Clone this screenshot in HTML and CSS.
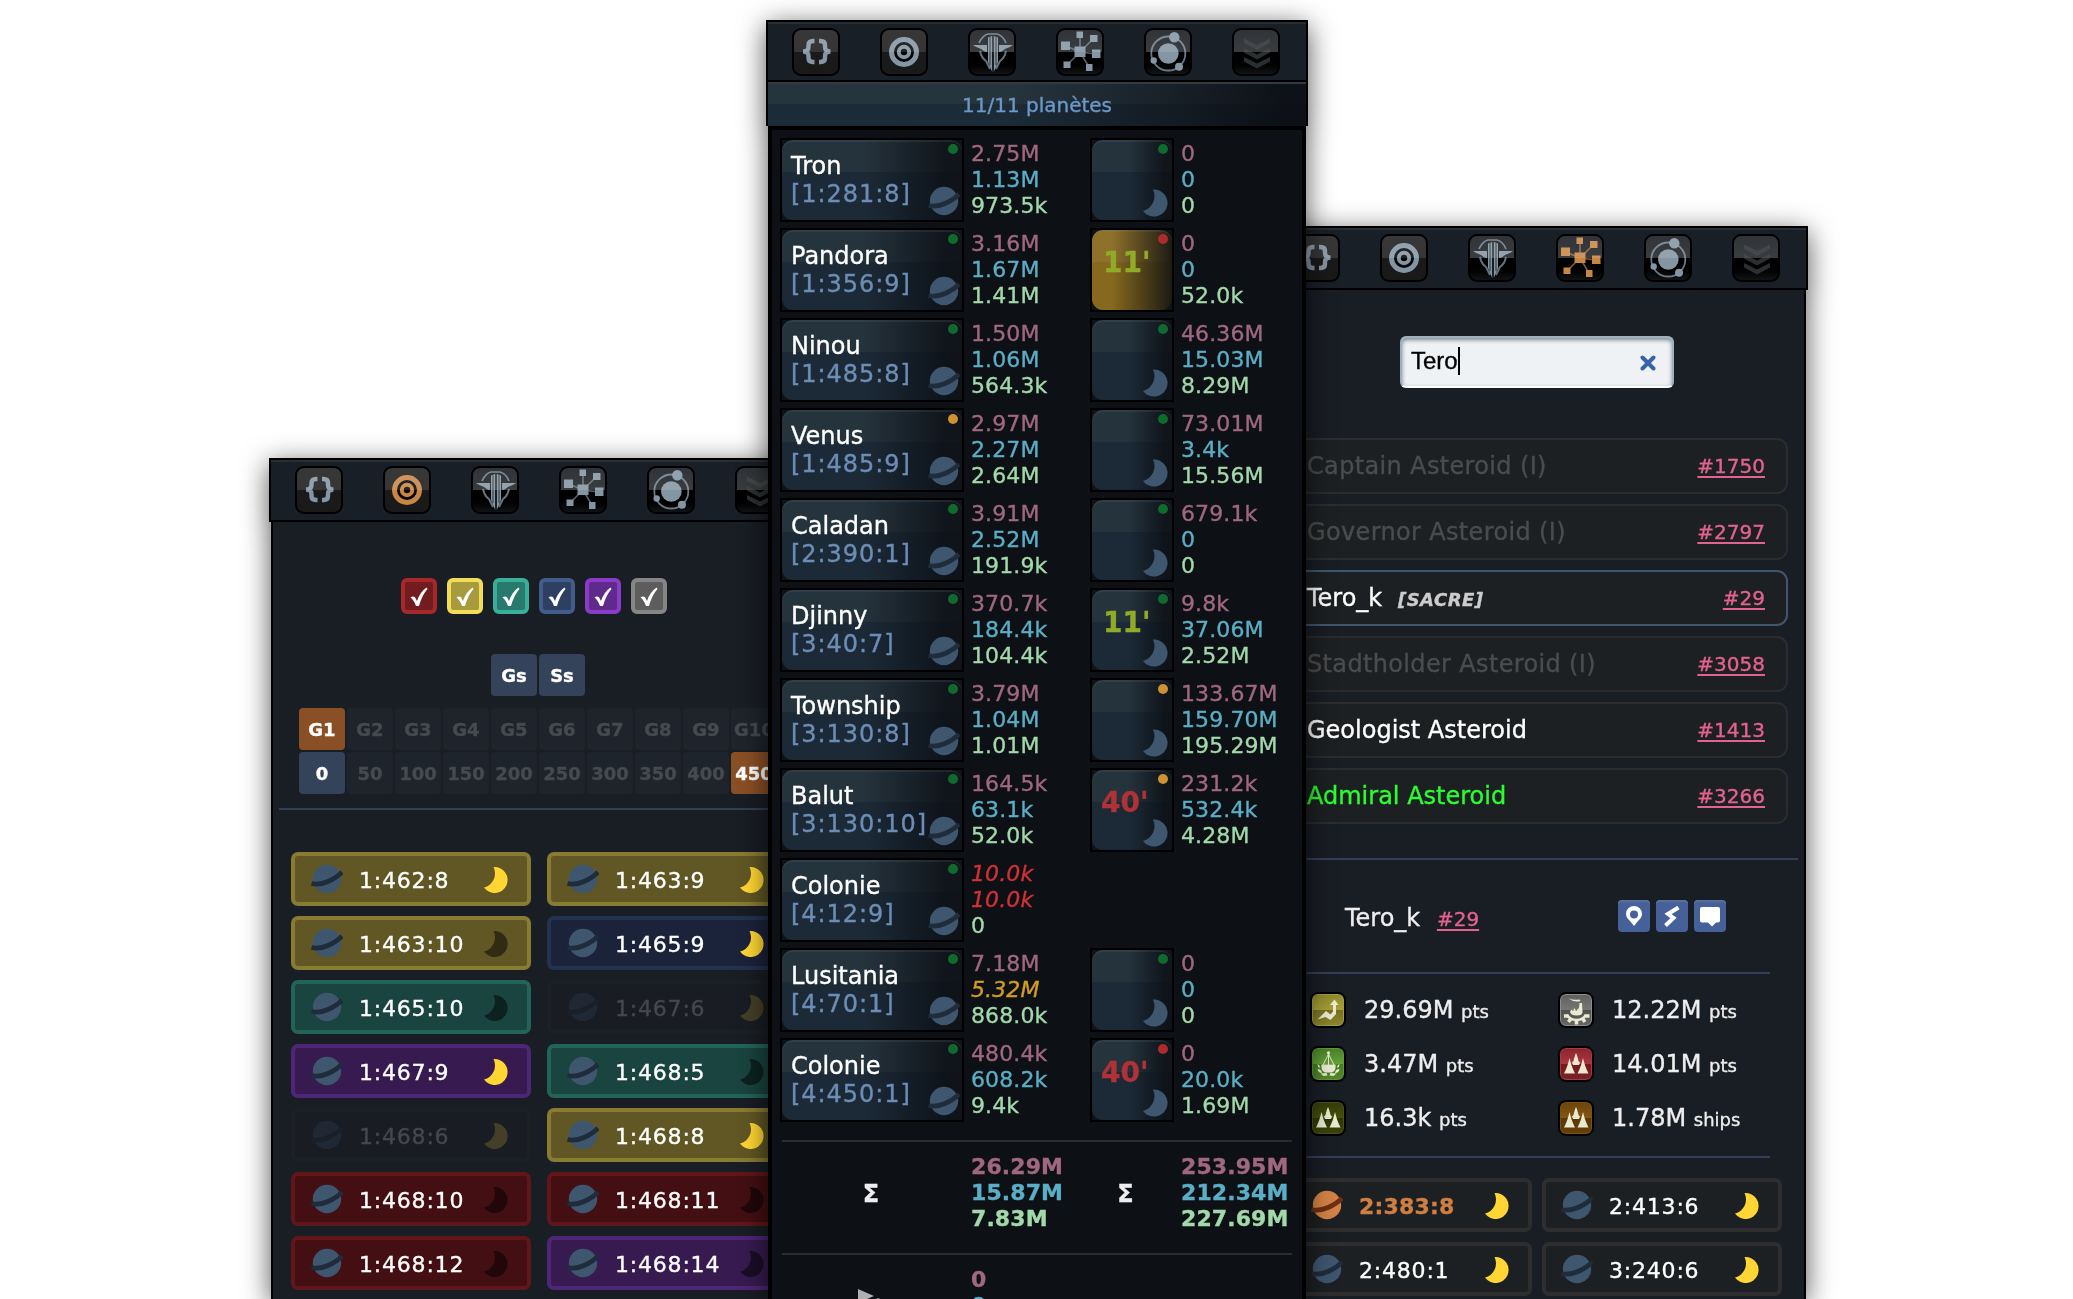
FILE: index.html
```html
<!DOCTYPE html>
<html lang="fr">
<head>
<meta charset="utf-8">
<title>Planètes</title>
<link rel="stylesheet" href="styles.css">
</head>
<body>
<svg class="defs" aria-hidden="true">
  <symbol id="braces" viewBox="0 0 48 48"><path d="M22.500 13H21q-4.500 0-4.500 4v2q0 4.500-5.500 4.500 5.500 0 5.500 4.500v2q0 4 4.500 4h1.500M27 13h1.500q4.500 0 4.500 4v2q0 4.500 5.500 4.500-5.500 0-5.500 4.500v2q0 4-4.500 4H27" fill="none" stroke="currentColor" stroke-width="4.400"/></symbol>
  <symbol id="target" viewBox="0 0 48 48"><circle cx="24" cy="24" r="12.500" fill="#050505" stroke="currentColor" stroke-width="5"/><circle cx="24" cy="24" r="5.200" fill="#050505" stroke="currentColor" stroke-width="4"/></symbol>
  <symbol id="sword" viewBox="0 0 48 48"><path d="M11 15C13 10 17 6.500 20 6h9c4 1 7 4 9 9" fill="none" stroke="currentColor" stroke-width="1.700" opacity=".8"/><path d="M5 17h14v7c-3 0-4-2-6-3-2-1-5-1.500-8-4zM45 17H31v7c3 0 4-2 6-3 2-1 5-1.500 8-4z" fill="currentColor"/><path d="M20 9.500 24.200 8v36L20 34zM25.800 8 30 9.500V34l-4.200 10z" fill="currentColor"/><path d="M22 9v28M28 9v28" stroke="#15181b" stroke-width=".8"/><path d="M12 23c1 5 3 8 6 10l4 8M38 23c-1 5-3 8-6 10l-4 8" fill="none" stroke="currentColor" stroke-width="2" opacity=".75"/></symbol>
  <symbol id="network" viewBox="0 0 48 48"><path d="M24 24V7M24 24 37.500 10.500M24 24 10 18M24 24l16 2M24 24 11 37M24 24l9 15" stroke="currentColor" stroke-width="1.600" opacity=".65"/><path d="M18.500 18.500h11v10.500h-11zM20.500 3.500h6.500v6.500h-6.500zM34 7h7.500v7H34zM5 13.500h9v8.500H5zM36 21.500h8.500v8.500H36zM7.500 33.500h7v6.500h-7zM30 36h6.500v7H30z" fill="currentColor"/></symbol>
  <symbol id="orbit" viewBox="0 0 48 48"><circle cx="24.300" cy="25.500" r="17" fill="none" stroke="currentColor" stroke-width="1.800" opacity=".8"/><g fill="currentColor"><circle cx="24.300" cy="25.500" r="10.300"/><circle cx="30.300" cy="9.200" r="5.200"/><circle cx="9.700" cy="32.500" r="3.200"/><circle cx="35" cy="38.800" r="4"/></g></symbol>
  <symbol id="chevrons" viewBox="0 0 48 48"><path d="M12 10.500 25 17l13-6.500v4.500l-13 7-13-7zM12 20l13 6.500L38 20v4.500l-13 7-13-7zM12 29l13 6.500L38 29v4.500l-13 7-13-7z" fill="currentColor"/></symbol>
  <symbol id="planet" viewBox="0 0 32 30"><circle class="globe" cx="16" cy="15" r="14.200"/><path class="ring" d="M.5 19.500Q8 21.500 17 17.500T31 8" fill="none" stroke-width="4.800"/></symbol>
  <symbol id="moon" viewBox="0 0 24 26"><path d="M9.500.1A13 13 0 1 1 0 20.600 14.500 14.500 0 0 0 9.500.1z" fill="currentColor"/></symbol>
  <symbol id="check" viewBox="0 0 36 36"><path d="M9.500 19.500q2.500-1.800 4.500-.3l2 3.800Q19 14 25.500 9.500l1 1.500Q21 17 18 28h-3Q13 22 9.500 19.500z" fill="#fff"/></symbol>
  <symbol id="fleet" viewBox="0 0 36 36"><path d="M18 7c1.500 3 2 6 2.500 8l1.500 1.500-1 2.500h-6l-1-2.500 1.500-1.500C16 13 16.500 10 18 7zM11.500 12c1 4 2.500 10 5.500 15.500H6C9 22 10.500 16 11.500 12zM25 12c1 4 2.500 10 5.500 15.500h-11C22.500 22 24 16 25 12z" fill="currentColor"/></symbol>
  <symbol id="rise" viewBox="0 0 36 36"><path d="M7.500 27.500 16 19l4.500 3.500 2.500-3V13h-3l4.500-5.500 4 5.500H26v9l-5.500 6-5-3z" fill="currentColor"/></symbol>
  <symbol id="science" viewBox="0 0 36 36"><path d="M18.500 6v13M18.500 8l-6 12M18.500 8l6 12" stroke="currentColor" stroke-width="1" fill="none"/><circle cx="18.500" cy="6.800" r="1.600" fill="currentColor"/><path d="M11.500 18.500h14q1 6-3.500 8h-7q-4.500-2-3.500-8zM7.500 18q3 1 2 4-2-1-2-4zM7.500 23q4 0 4.500 4-4 0-4.500-4zM29.500 18q-3 1-2 4 2-1 2-4zM29.500 23q-4 0-4.500 4 4 0 4.500-4zM10.500 27.500l6-.5 1 2.500-4 .5zM26.500 27.500l-6-.5-1 2.500 4 .5z" fill="currentColor"/></symbol>
  <symbol id="industry" viewBox="0 0 36 36"><path d="M10.500 6.500q5 2 11 1l1 1.500q-6 2-12-2.500zM21.500 11H24l.5 9q0 3.500-6 3.500t-6.500-4l1.500-2 1.500 1.500 1.500-3 1.500 3 3-3z" fill="currentColor"/><path d="M9 22.500q2.500 5.500 9.500 5.500t9.500-5.500" fill="none" stroke="currentColor" stroke-width="2.600"/><path d="M6 24h4M27.500 24h4M10.500 30l2.500-3.500M27 30l-2.500-3.500M18.500 28v4.500" stroke="currentColor" stroke-width="3.600"/></symbol>
</svg>

<main class="stage">

<section class="panel panel-targets">
  <header class="tabs">
    <a class="tab"><svg><use href="#braces"/></svg></a><a class="tab on"><svg><use href="#target"/></svg></a><a class="tab deep"><svg><use href="#sword"/></svg></a><a class="tab deep"><svg><use href="#network"/></svg></a><a class="tab deep"><svg><use href="#orbit"/></svg></a><a class="tab deep off"><svg><use href="#chevrons"/></svg></a>
  </header>
  <div class="body">
    <div class="checks">
      <span class="check c-red"><svg><use href="#check"/></svg></span><span class="check c-yellow"><svg><use href="#check"/></svg></span><span class="check c-teal"><svg><use href="#check"/></svg></span><span class="check c-blue"><svg><use href="#check"/></svg></span><span class="check c-purple"><svg><use href="#check"/></svg></span><span class="check c-gray"><svg><use href="#check"/></svg></span>
    </div>
    <div class="keys keys-toggle"><b class="key set">Gs</b><b class="key set">Ss</b></div>
    <div class="keys">
      <b class="key cur">G1</b><b class="key">G2</b><b class="key">G3</b><b class="key">G4</b><b class="key">G5</b><b class="key">G6</b><b class="key">G7</b><b class="key">G8</b><b class="key">G9</b><b class="key">G10</b>
      <b class="key set">0</b><b class="key">50</b><b class="key">100</b><b class="key">150</b><b class="key">200</b><b class="key">250</b><b class="key">300</b><b class="key">350</b><b class="key">400</b><b class="key cur">450</b>
    </div>
    <hr class="rule rule-targets">
    <div class="chips">
      <div class="chip yellow"><svg class="planet"><use href="#planet"/></svg><span>1:462:8</span><svg class="moon"><use href="#moon"/></svg></div>
      <div class="chip yellow"><svg class="planet"><use href="#planet"/></svg><span>1:463:9</span><svg class="moon"><use href="#moon"/></svg></div>
      <div class="chip yellow"><svg class="planet"><use href="#planet"/></svg><span>1:463:10</span><svg class="moon none"><use href="#moon"/></svg></div>
      <div class="chip blue"><svg class="planet"><use href="#planet"/></svg><span>1:465:9</span><svg class="moon"><use href="#moon"/></svg></div>
      <div class="chip teal"><svg class="planet"><use href="#planet"/></svg><span>1:465:10</span><svg class="moon none"><use href="#moon"/></svg></div>
      <div class="chip faded"><svg class="planet"><use href="#planet"/></svg><span>1:467:6</span><svg class="moon"><use href="#moon"/></svg></div>
      <div class="chip purple"><svg class="planet"><use href="#planet"/></svg><span>1:467:9</span><svg class="moon"><use href="#moon"/></svg></div>
      <div class="chip teal"><svg class="planet"><use href="#planet"/></svg><span>1:468:5</span><svg class="moon none"><use href="#moon"/></svg></div>
      <div class="chip faded"><svg class="planet"><use href="#planet"/></svg><span>1:468:6</span><svg class="moon"><use href="#moon"/></svg></div>
      <div class="chip yellow"><svg class="planet"><use href="#planet"/></svg><span>1:468:8</span><svg class="moon"><use href="#moon"/></svg></div>
      <div class="chip red"><svg class="planet"><use href="#planet"/></svg><span>1:468:10</span><svg class="moon none"><use href="#moon"/></svg></div>
      <div class="chip red"><svg class="planet"><use href="#planet"/></svg><span>1:468:11</span><svg class="moon none"><use href="#moon"/></svg></div>
      <div class="chip red"><svg class="planet"><use href="#planet"/></svg><span>1:468:12</span><svg class="moon none"><use href="#moon"/></svg></div>
      <div class="chip purple"><svg class="planet"><use href="#planet"/></svg><span>1:468:14</span><svg class="moon none"><use href="#moon"/></svg></div>
    </div>
  </div>
</section>

<section class="panel panel-empire">
  <header class="tabs">
    <a class="tab"><svg><use href="#braces"/></svg></a><a class="tab"><svg><use href="#target"/></svg></a><a class="tab deep"><svg><use href="#sword"/></svg></a><a class="tab deep"><svg><use href="#network"/></svg></a><a class="tab deep"><svg><use href="#orbit"/></svg></a><a class="tab deep off"><svg><use href="#chevrons"/></svg></a>
  </header>
  <div class="count">11/11 planètes</div>
  <div class="body">
    <div class="colonies">
      <div class="tile"><b>Tron</b><i>[1:281:8]</i><u class="dot"></u><svg class="planet"><use href="#planet"/></svg></div>
      <div class="res"><p>2.75M</p><p>1.13M</p><p>973.5k</p></div>
      <div class="tile sat"><u class="dot"></u><svg class="moon"><use href="#moon"/></svg></div>
      <div class="res"><p>0</p><p>0</p><p>0</p></div>

      <div class="tile"><b>Pandora</b><i>[1:356:9]</i><u class="dot"></u><svg class="planet"><use href="#planet"/></svg></div>
      <div class="res"><p>3.16M</p><p>1.67M</p><p>1.41M</p></div>
      <div class="tile sat gold"><em>11'</em><u class="dot red"></u></div>
      <div class="res"><p>0</p><p>0</p><p>52.0k</p></div>

      <div class="tile"><b>Ninou</b><i>[1:485:8]</i><u class="dot"></u><svg class="planet"><use href="#planet"/></svg></div>
      <div class="res"><p>1.50M</p><p>1.06M</p><p>564.3k</p></div>
      <div class="tile sat"><u class="dot"></u><svg class="moon"><use href="#moon"/></svg></div>
      <div class="res"><p>46.36M</p><p>15.03M</p><p>8.29M</p></div>

      <div class="tile"><b>Venus</b><i>[1:485:9]</i><u class="dot amber"></u><svg class="planet"><use href="#planet"/></svg></div>
      <div class="res"><p>2.97M</p><p>2.27M</p><p>2.64M</p></div>
      <div class="tile sat"><u class="dot"></u><svg class="moon"><use href="#moon"/></svg></div>
      <div class="res"><p>73.01M</p><p>3.4k</p><p>15.56M</p></div>

      <div class="tile"><b>Caladan</b><i>[2:390:1]</i><u class="dot"></u><svg class="planet"><use href="#planet"/></svg></div>
      <div class="res"><p>3.91M</p><p>2.52M</p><p>191.9k</p></div>
      <div class="tile sat"><u class="dot"></u><svg class="moon"><use href="#moon"/></svg></div>
      <div class="res"><p>679.1k</p><p>0</p><p>0</p></div>

      <div class="tile"><b>Djinny</b><i>[3:40:7]</i><u class="dot"></u><svg class="planet"><use href="#planet"/></svg></div>
      <div class="res"><p>370.7k</p><p>184.4k</p><p>104.4k</p></div>
      <div class="tile sat"><em>11'</em><u class="dot"></u><svg class="moon"><use href="#moon"/></svg></div>
      <div class="res"><p>9.8k</p><p>37.06M</p><p>2.52M</p></div>

      <div class="tile"><b>Township</b><i>[3:130:8]</i><u class="dot"></u><svg class="planet"><use href="#planet"/></svg></div>
      <div class="res"><p>3.79M</p><p>1.04M</p><p>1.01M</p></div>
      <div class="tile sat"><u class="dot amber"></u><svg class="moon"><use href="#moon"/></svg></div>
      <div class="res"><p>133.67M</p><p>159.70M</p><p>195.29M</p></div>

      <div class="tile"><b>Balut</b><i>[3:130:10]</i><u class="dot"></u><svg class="planet"><use href="#planet"/></svg></div>
      <div class="res"><p>164.5k</p><p>63.1k</p><p>52.0k</p></div>
      <div class="tile sat"><em class="late">40'</em><u class="dot amber"></u><svg class="moon"><use href="#moon"/></svg></div>
      <div class="res"><p>231.2k</p><p>532.4k</p><p>4.28M</p></div>

      <div class="tile"><b>Colonie</b><i>[4:12:9]</i><u class="dot"></u><svg class="planet"><use href="#planet"/></svg></div>
      <div class="res"><p class="full">10.0k</p><p class="full">10.0k</p><p>0</p></div>
      <div></div><div></div>

      <div class="tile"><b>Lusitania</b><i>[4:70:1]</i><u class="dot"></u><svg class="planet"><use href="#planet"/></svg></div>
      <div class="res"><p>7.18M</p><p class="near">5.32M</p><p>868.0k</p></div>
      <div class="tile sat"><u class="dot"></u><svg class="moon"><use href="#moon"/></svg></div>
      <div class="res"><p>0</p><p>0</p><p>0</p></div>

      <div class="tile"><b>Colonie</b><i>[4:450:1]</i><u class="dot"></u><svg class="planet"><use href="#planet"/></svg></div>
      <div class="res"><p>480.4k</p><p>608.2k</p><p>9.4k</p></div>
      <div class="tile sat"><em class="late">40'</em><u class="dot red"></u><svg class="moon"><use href="#moon"/></svg></div>
      <div class="res"><p>0</p><p>20.0k</p><p>1.69M</p></div>
    </div>
    <div class="totals">
      <b class="sigma">Σ</b><div class="res"><p>26.29M</p><p>15.87M</p><p>7.83M</p></div>
      <b class="sigma narrow">Σ</b><div class="res"><p>253.95M</p><p>212.34M</p><p>227.69M</p></div>
    </div>
    <div class="totals moving">
      <svg class="flight" viewBox="0 0 44 24"><path d="M0 0 16 7 0 14zM14 13l6-4 4 2v6H14z" fill="#b0b0b0"/></svg><div class="res"><p>0</p><p>0</p></div>
    </div>
  </div>
</section>

<section class="panel panel-search">
  <header class="tabs">
    <a class="tab"><svg><use href="#braces"/></svg></a><a class="tab"><svg><use href="#target"/></svg></a><a class="tab deep"><svg><use href="#sword"/></svg></a><a class="tab deep on"><svg><use href="#network"/></svg></a><a class="tab deep"><svg><use href="#orbit"/></svg></a><a class="tab deep off"><svg><use href="#chevrons"/></svg></a>
  </header>
  <div class="body">
    <div class="search"><span>Tero</span><span class="caret"></span><svg class="clear" viewBox="0 0 16 16"><path d="M2.500 2.500l11 11M13.500 2.500l-11 11" stroke="#3a62a8" stroke-width="4" stroke-linecap="round"/></svg></div>
    <div class="results">
      <div class="result idle"><span>Captain Asteroid (I)</span><a>#1750</a></div>
      <div class="result idle"><span>Governor Asteroid (I)</span><a>#2797</a></div>
      <div class="result active"><span>Tero_k <em>[SACRE]</em></span><a>#29</a></div>
      <div class="result idle"><span>Stadtholder Asteroid (I)</span><a>#3058</a></div>
      <div class="result"><span>Geologist Asteroid</span><a>#1413</a></div>
      <div class="result green"><span>Admiral Asteroid</span><a>#3266</a></div>
    </div>
    <hr class="rule rule-results">
    <div class="player">
      <span class="who">Tero_k <a>#29</a></span>
      <span class="act"><svg viewBox="0 0 32 32"><path fill-rule="evenodd" d="M16 6a8 8 0 0 1 8 8c0 3-2 5-4 7l-4 5-4-5c-2-2-4-4-4-7a8 8 0 0 1 8-8zm0 4.500a4 4 0 1 0 0 8 4 4 0 0 0 0-8z" fill="#fff"/></svg></span>
      <span class="act"><svg viewBox="0 0 32 32"><path d="M22.500 7.500 12 14l5.500 4L9.500 25.500" fill="none" stroke="#fff" stroke-width="4"/></svg></span>
      <span class="act"><svg viewBox="0 0 32 32"><path d="M8 7h16q2 0 2 2v11.500q0 2-2 2h-2l-4 4-4-4H8q-2 0-2-2V9q0-2 2-2z" fill="#fff"/></svg></span>
    </div>
    <hr class="rule rule-player">
    <div class="stats">
      <i class="badge olive"><svg><use href="#rise"/></svg></i><span>29.69M <small>pts</small></span><i class="badge steel"><svg><use href="#industry"/></svg></i><span>12.22M <small>pts</small></span>
      <i class="badge green"><svg><use href="#science"/></svg></i><span>3.47M <small>pts</small></span><i class="badge crimson"><svg><use href="#fleet"/></svg></i><span>14.01M <small>pts</small></span>
      <i class="badge moss"><svg><use href="#fleet"/></svg></i><span>16.3k <small>pts</small></span><i class="badge brown"><svg><use href="#fleet"/></svg></i><span>1.78M <small>ships</small></span>
    </div>
    <hr class="rule rule-player">
    <div class="chips">
      <div class="chip plain home"><svg class="planet"><use href="#planet"/></svg><span>2:383:8</span><svg class="moon"><use href="#moon"/></svg></div>
      <div class="chip plain"><svg class="planet"><use href="#planet"/></svg><span>2:413:6</span><svg class="moon"><use href="#moon"/></svg></div>
      <div class="chip plain"><svg class="planet"><use href="#planet"/></svg><span>2:480:1</span><svg class="moon"><use href="#moon"/></svg></div>
      <div class="chip plain"><svg class="planet"><use href="#planet"/></svg><span>3:240:6</span><svg class="moon"><use href="#moon"/></svg></div>
    </div>
  </div>
</section>

</main>
</body>
</html>
```
FILE: styles.css
```css
* { box-sizing: border-box; }
body { margin: 0; background: #fff; font-family: "DejaVu Sans", Verdana, sans-serif; color: #fff; overflow: hidden; -webkit-text-stroke: .35px; }
p { margin: 0; }
.defs { position: absolute; width: 0; height: 0; }

/* Overlapping panels */
.stage { display: flex; width: 2073px; height: 1299px; padding-left: 269px; overflow: hidden; }
.panel { flex: none; width: 542px; display: flex; flex-direction: column; filter: drop-shadow(0 6px 14px rgba(0,0,0,.68)); }
.panel-targets { margin-top: 458px; }
.panel-empire { margin-top: 20px; margin-left: -45px; z-index: 1; }
.panel-search { margin-top: 226px; margin-left: -42px; }
.body { flex: 1; min-height: 0; overflow: hidden; margin: 0 2px; border: solid #000; border-width: 0 2px; background: #191d24; }

/* Header tabs */
.tabs { flex: none; display: flex; gap: 40px; height: 64px; padding: 6px 24px; border: 2px solid #000; background: #191f27; box-shadow: inset 0 2px #282e33; }
.tab { position: relative; width: 48px; height: 48px; border-radius: 9px; border: 2px solid #000; overflow: hidden; color: #8496a4; background: linear-gradient(#1c1c1c, #191919); }
.tab::after { content: ""; position: absolute; inset: 0 0 50% 0; background: rgba(255,255,255,.12); }
.tab svg { display: block; width: 48px; height: 48px; margin: -2px; }
.tab.deep { background: linear-gradient(#14191d, #1e2225 50%, #000 50%, #020202 80%, #101315); }
.tab.on { color: #c88646; }
.tab.off { color: #2c2f31; }

/* Rules */
.rule { height: 2px; border: 0; margin: 0; background: #2f4058; }
.rule-targets { margin: 14px 0 42px 6px; }
.rule-results { margin: 34px 6px 0; }
.rule-player { margin: 0 34px; }

/* Colour filters and galaxy keys */
.checks { display: flex; gap: 10px; padding: 56px 0 40px 128px; }
.check { width: 36px; height: 36px; border-radius: 6px; border: 4px solid; }
.check svg { display: block; width: 36px; height: 36px; margin: -4px; }
.c-red { background: #731c20; border-color: #a8272b; }
.c-yellow { background: #a89b3d; border-color: #f1de56; }
.c-teal { background: #287a6c; border-color: #39ae9a; }
.c-blue { background: #2e4062; border-color: #425c8c; }
.c-purple { background: #602a8c; border-color: #8a3cc8; }
.c-gray { background: #5d5d5d; border-color: #868686; }
.keys { display: grid; grid-template-columns: repeat(10, 46px); gap: 2px; padding-left: 26px; }
.keys-toggle { padding: 0 0 12px 218px; }
.key { display: block; height: 42px; border-radius: 4px; background: #1d242b; color: #454a4e; font-size: 18px; line-height: 43px; text-align: center; white-space: nowrap; }
.key.set { background: #34425a; color: #fff; }
.key.cur { background: #8a4f24; color: #fff; }

/* Coordinate chips */
.planet { --globe: #3f566f; --ring: #1f2c3b; width: 32px; height: 30px; }
.globe { fill: var(--globe); }
.ring { stroke: var(--ring); }
.moon { width: 24px; height: 26px; color: #ffd633; }
.chips { display: grid; grid-template-columns: 240px 240px; gap: 10px 16px; padding-left: 18px; }
.panel-search .chips { column-gap: 10px; padding: 20px 0 0 22px; }
.chip { display: flex; align-items: center; height: 54px; padding: 0 19px 0 16px; border: 4px solid; border-radius: 7px; font-size: 22px; letter-spacing: .8px; }
.panel-search .chip { padding-left: 15px; }
.chip span { flex: 1; padding: 2px 0 0 16px; white-space: nowrap; }
.chip .moon { margin-top: 2px; }
.chip .none { color: rgba(0,0,0,.5); }
.yellow { background: #615724; border-color: #897b31; }
.blue { background: #1b233b; border-color: #233250; }
.chip.teal { background: #19443f; border-color: #22635a; }
.chip.purple { background: #371b50; border-color: #4f2577; }
.chip.red { background: #430f12; border-color: #611619; }
.chip.plain { background: #1d2022; border-color: #2e2e2f; }
.faded { background: #191d23; border-color: #1c2023; color: #45484c; }
.faded .planet { --globe: #202834; --ring: #1a202a; }
.faded .moon { color: #443f27; }
.home { color: #d07f42; }
.home span { font-weight: bold; letter-spacing: .2px; }
.home .planet { --globe: #d28346; --ring: #6f2f14; }

/* Empire overview */
.panel-empire .tabs { height: 62px; }
.panel-empire .body { border-width: 4px 4px 0; background: #0d1014; }
.count { flex: none; height: 44px; border: solid #000; border-width: 0 2px; text-align: center; font-size: 20px; line-height: 46px; color: #6c98c6; background: linear-gradient(100deg, transparent 45%, rgba(10,12,17,.85) 95%), linear-gradient(#26343e 50%, #1c2b38 50%); box-shadow: inset 0 2px #303b43; }
.colonies, .totals { display: grid; grid-template-columns: 184px 110px 84px 1fr; column-gap: 8px; }
.colonies { padding: 8px 0 18px 8px; grid-auto-rows: 84px; row-gap: 6px; }
.tile { position: relative; border: 2px solid #000; padding: 12px 0 0 9px; line-height: 28px; font-size: 24px; white-space: nowrap; background: #0f1317; isolation: isolate; }
.tile::before { content: ""; position: absolute; z-index: -1; inset: 0; border-radius: 11px; background: linear-gradient(90deg, transparent 45%, rgba(9,12,17,.75) 90%, rgba(14,16,20,.85)), linear-gradient(#25333d 40%, #1c2a37 40%); box-shadow: inset 0 2px rgba(130,150,165,.13); }
.tile.gold::before { background: linear-gradient(90deg, transparent 25%, rgba(9,12,17,.85)), linear-gradient(#8e712a 40%, #86691e 40%); }
.tile b, .tile i { display: block; font-weight: normal; font-style: normal; }
.tile i { color: #6c8db5; letter-spacing: .95px; }
.tile em { position: absolute; left: 11px; top: 16px; font: bold 28px/34px "DejaVu Sans", sans-serif; color: #90ab26; }
.tile em.late { left: 9px; color: #b13236; }
.dot { position: absolute; right: 4px; top: 4px; width: 10px; height: 10px; border-radius: 50%; background: #0f6b2d; }
.dot.amber { background: #cf9132; }
.dot.red { background: #ad2b2e; }
.tile .planet { position: absolute; right: 2px; bottom: 4px; }
.tile .moon { position: absolute; right: 4px; bottom: 3px; width: 25px; height: 28px; color: #3f566f; }
.res { padding-top: 3px; font-size: 22px; line-height: 26px; white-space: nowrap; margin-left: -1px; letter-spacing: .1px; }
.res p:nth-child(1) { color: #a0687f; }
.res p:nth-child(2) { color: #5aaec6; }
.res p:nth-child(3) { color: #a2d9ab; }
.res p.full { color: #d23135; font-style: italic; }
.res p.near { color: #d29d22; font-style: italic; }
.totals { margin: 0 10px; padding: 9px 0 21px; border-top: 2px solid #2c2c2e; font-weight: bold; grid-template-columns: 182px 110px 84px 1fr; }
.sigma { align-self: center; padding: 4px 4px 0 0; text-align: center; font-size: 24px; color: #eee; }
.narrow { padding-right: 13px; }
.flight { width: 44px; height: 24px; margin: 25px 0 0 76px; }

/* Player search */
.search { display: flex; align-items: center; width: 274px; height: 52px; margin: 46px 0 50px 130px; padding: 0 16px 2px 9px; border-radius: 6px; border: 2px solid #9fb0bd; border-bottom-color: #fff; background: #eff2f5; color: #000; font: 24px "Liberation Sans", Arial, sans-serif; box-shadow: inset 0 2px 4px #78848e; }
.caret { width: 2px; height: 28px; margin-right: auto; background: #000; }
.clear { width: 16px; height: 16px; margin-top: 4px; }
.results { display: grid; gap: 10px; padding: 0 16px; }
.result { display: flex; justify-content: space-between; height: 56px; padding: 0 21px 0 19px; border: 2px solid #2d2c2d; border-radius: 11px; background: #1d2022; font-size: 24px; line-height: 52px; white-space: nowrap; }
.result.active { border-color: #40566f; }
.result em { margin-left: 8px; font-size: 18px; font-weight: bold; color: #ccc; letter-spacing: .5px; }
.idle { color: #4b4c4d; }
.idle span { letter-spacing: .35px; }
.result.green { color: #2cfc31; }
.panel-search a:not(.tab) { font-size: 20px; color: #e4638e; text-decoration: underline; text-decoration-thickness: 2px; text-underline-offset: 3px; }
.player { display: flex; align-items: center; gap: 6px; height: 112px; padding: 0 78px 0 75px; color: #eee; }
.who { flex: 1; padding-top: 4px; font-size: 24px; }
.who a { margin-left: 9px; }
.act { width: 32px; height: 32px; border-radius: 4px; background: #46609a; box-shadow: inset 0 2px #587099; }
.act svg { display: block; width: 32px; height: 32px; }
.stats { display: grid; grid-template-columns: 36px 176px 36px 1fr; grid-auto-rows: 36px; gap: 18px; padding: 18px 0 20px 40px; font-size: 24px; line-height: 36px; color: #eee; white-space: nowrap; }
.stats small { font-size: 18px; }
.badge { --rim: #a39f45; width: 36px; height: 36px; border: 2px solid #000; border-radius: 8px; color: #e9ead0; box-shadow: inset 0 0 0 1px var(--rim); }
.badge svg { display: block; width: 36px; height: 36px; margin: -2px; }
.badge.olive { background: linear-gradient(#8f892d, #a8a038 50%, #76701f 50%, #8d872d); }
.badge.green { --rim: #5c9a3c; background: linear-gradient(#497f28, #64a338 50%, #3f7c1c 50%, #59892f); }
.badge.moss { --rim: #4b5314; background: linear-gradient(#343c08, #454f0c 50%, #2d3504 50%, #3c450a); }
.badge.steel { --rim: #8d8d8d; background: linear-gradient(#5f5f5f, #777 50%, #505050 50%, #686868); }
.badge.crimson { --rim: #a63a44; background: linear-gradient(#8b242e, #ad3540 50%, #78161f 50%, #7c222a); }
.badge.brown { --rim: #7e5214; background: linear-gradient(#6a430b, #855610 50%, #5b3705 50%, #64400b); }
```
